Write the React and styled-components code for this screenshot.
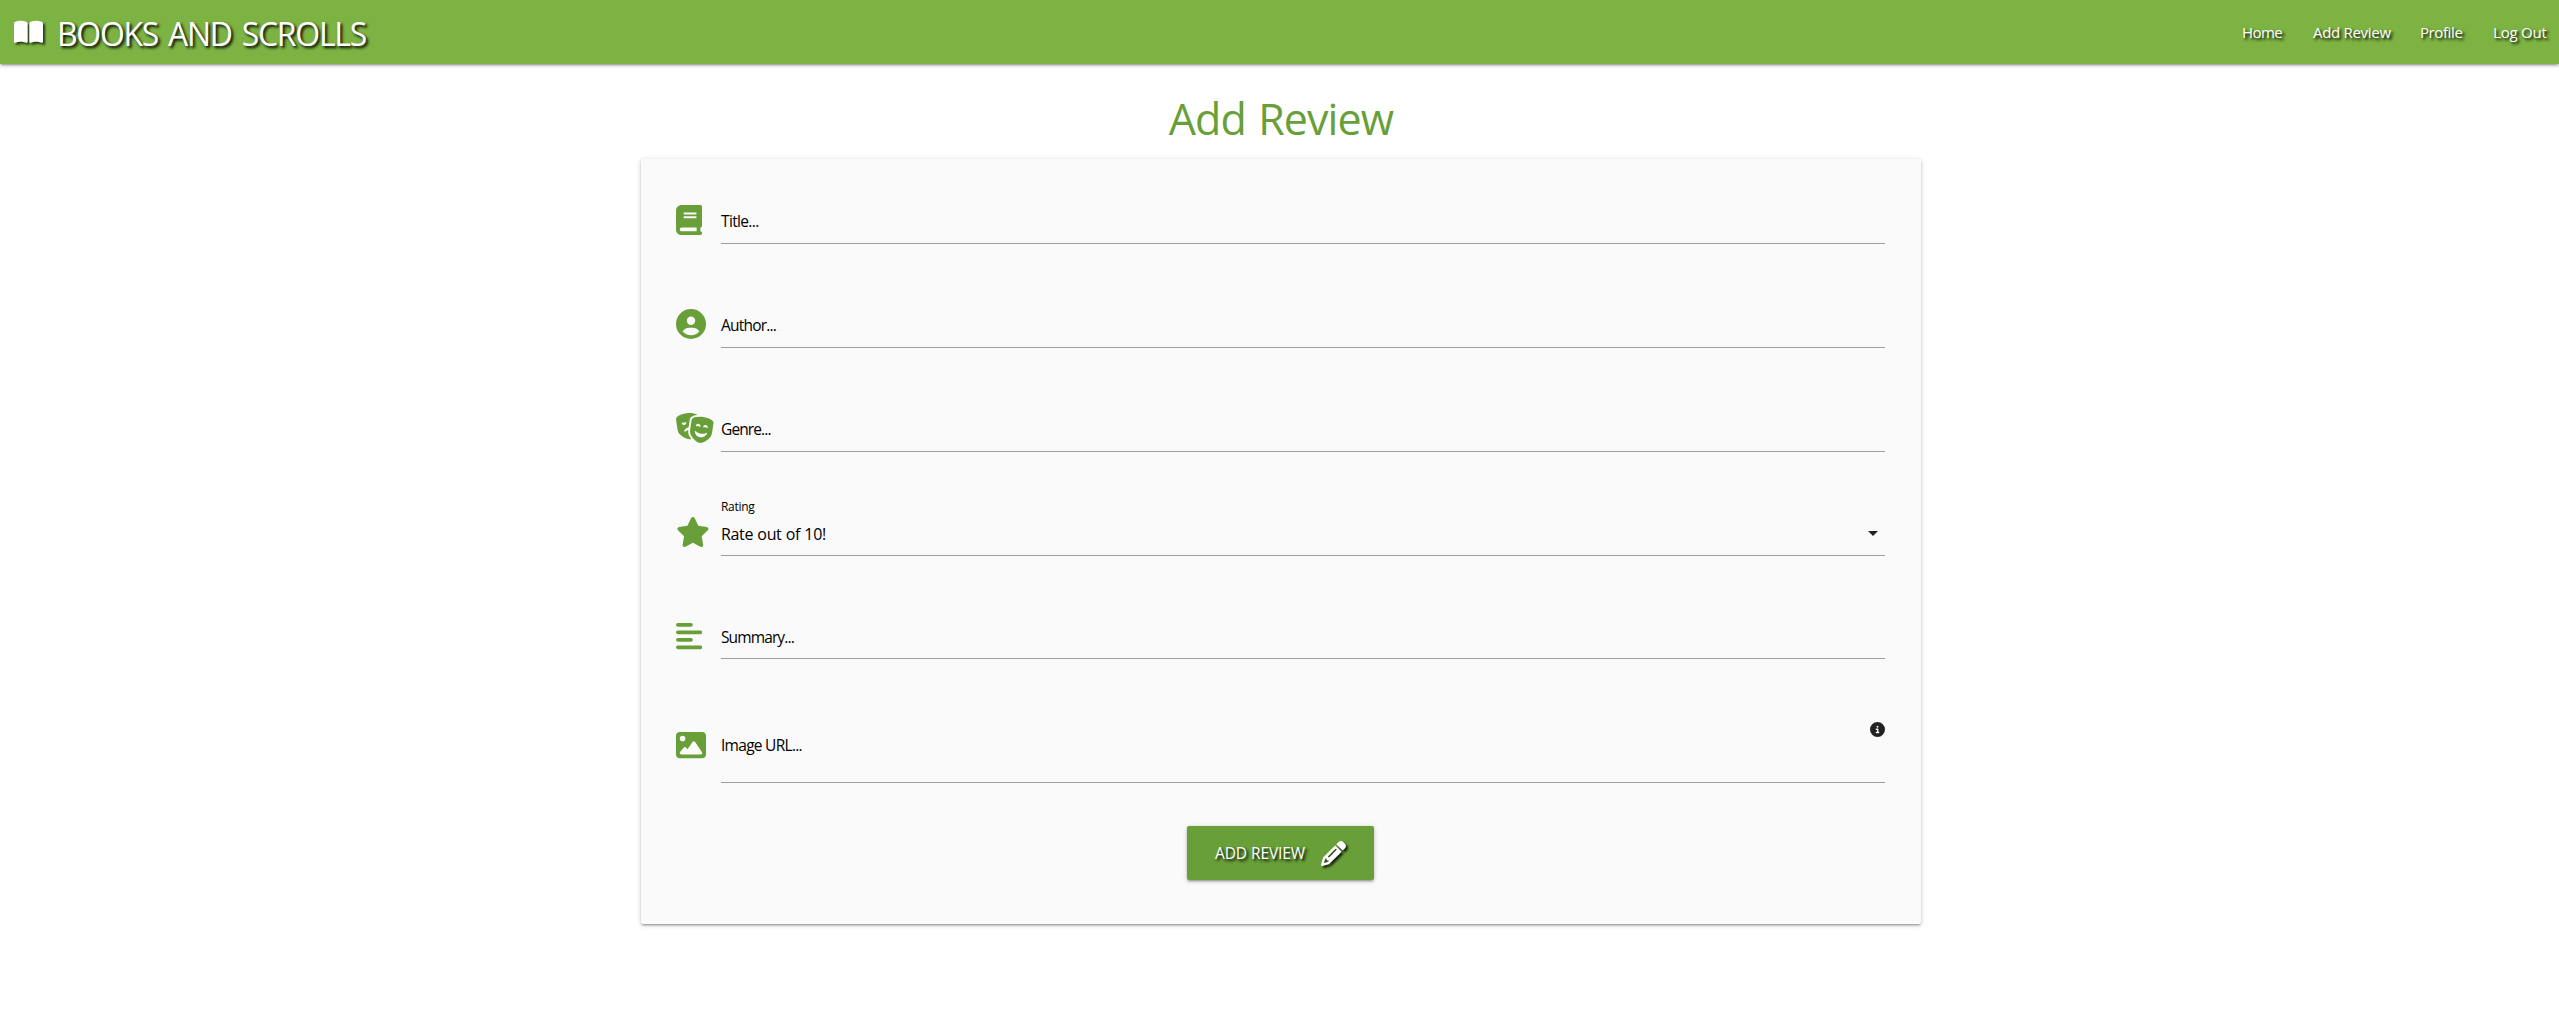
import React from "react";
import styled, { createGlobalStyle } from "styled-components";
import {
  FaBookOpen, FaBook, FaCircleUser, FaMasksTheater, FaStar,
  FaAlignLeft, FaImage, FaCircleInfo, FaPencil,
} from "react-icons/fa6";

const GlobalStyle = createGlobalStyle`
  *, *::before, *::after { box-sizing: border-box; }
  body {
    margin: 0;
    background: #fff;
    color: rgba(0, 0, 0, 0.87);
    font-family: "Segoe UI", "Open Sans", "Noto Sans", sans-serif;
  }
`;

const materialShadow = `
  0 2px 2px 0 rgba(0, 0, 0, 0.14),
  0 3px 1px -2px rgba(0, 0, 0, 0.12),
  0 1px 5px 0 rgba(0, 0, 0, 0.2)`;

const Page = styled.div`
  display: flex;
  flex-direction: column;
  min-height: 100vh;
`;

const Text = styled.span`
  display: block;
  white-space: nowrap;
  letter-spacing: ${(p) => p.$track || 0}px;
  word-spacing: ${(p) => p.$word || 0}px;
`;

const NavBar = styled.nav`
  display: flex;
  justify-content: space-between;
  height: 64px;
  background: #7cb342;
  box-shadow: ${materialShadow};
  color: #fff;
  text-shadow: 2px 2px 3px #000;
`;

const Brand = styled.a`
  display: flex;
  align-items: center;
  gap: 14px;
  padding-left: 14px;
  font-size: 32px;
  line-height: 64px;

  svg {
    width: 29px;
    height: 26px;
    filter: drop-shadow(2px 2px 1px rgba(0, 0, 0, 0.7));
  }
  span { padding-top: 3px; }
`;

const NavLinks = styled.ul`
  display: flex;
  margin: 0;
  padding: 0 13px 0 0;
  gap: 30px;
  list-style: none;
  font-size: 15px;
  line-height: 65px;
`;

const NavItem = styled.li`
  width: ${(p) => p.$width}px;
`;

const Heading = styled.h3`
  display: flex;
  justify-content: center;
  margin: 26px 0 12px;
  padding-left: 3px;
  color: #689f38;
  font-size: 43px;
  font-weight: 400;
  line-height: 57px;
`;

const Card = styled.div`
  display: flex;
  flex-direction: column;
  gap: 40px;
  width: 1280px;
  height: 765px;
  margin: 0 0 0 641px;
  padding: 21px 36px 0 35px;
  border-radius: 2px;
  background: #fafafa;
  box-shadow: ${materialShadow};
`;

const Field = styled.div`
  display: grid;
  grid-template-columns: 45px 1fr;
  height: ${(p) => p.$height || 64}px;
`;

const IconCell = styled.div`
  padding-top: ${(p) => p.$top || 25}px;
  color: #689f38;
  svg { display: block; height: 30px; width: ${(p) => p.$width}px; }
`;

const Control = styled.div`
  display: flex;
  justify-content: space-between;
  border-bottom: 1px solid #9e9e9e;
  color: #000;
  font-size: 15.5px;
  line-height: 20px;
`;

const Label = styled.div`
  padding-top: ${(p) => (p.$tall ? 36 : 31)}px;
`;

const SelectText = styled.div`
  display: flex;
  flex-direction: column;
  padding-top: 6px;
  font-size: 16px;
  gap: 8px;
`;

const SmallLabel = styled.div`
  font-size: 12px;
  line-height: 18px;
`;

const Caret = styled.span`
  margin: 39px 7px 0 0;
  width: 10px;
  height: 5px;
  background: #212121;
  clip-path: polygon(0 0, 100% 0, 50% 100%);
`;

const Info = styled(FaCircleInfo)`
  width: 15px;
  height: 15px;
  margin-top: 23px;
  color: #212121;
`;

const Submit = styled.button`
  display: flex;
  align-items: center;
  align-self: center;
  justify-content: space-between;
  width: 187px;
  height: 54px;
  margin: 3px 0 0;
  padding: 0 28px;
  border: 0;
  border-radius: 2px;
  background: #689f38;
  box-shadow: ${materialShadow};
  color: #fff;
  font-family: inherit;
  font-size: 15.5px;
  text-shadow: 2px 2px 3px #000;

  svg {
    width: 25px;
    height: 25px;
    filter: drop-shadow(2px 2px 1px rgba(0, 0, 0, 0.8));
  }
`;

const links = [
  { name: "Home", width: 41, track: -0.6 },
  { name: "Add Review", width: 77, track: -0.3 },
  { name: "Profile", width: 43, track: -0.4 },
  { name: "Log Out", width: 53, track: -0.2 },
];

function TextField({ icon: Icon, iconWidth, iconTop, height, label, track, tall, children }) {
  return (
    <Field $height={height}>
      <IconCell $top={iconTop} $width={iconWidth}><Icon /></IconCell>
      <Control>
        <Label $tall={tall}><Text $track={track}>{label}</Text></Label>
        {children}
      </Control>
    </Field>
  );
}

export default function App() {
  return (
    <Page>
      <GlobalStyle />
      <NavBar>
        <Brand>
          <FaBookOpen />
          <Text $track={-1.3} $word={3}>BOOKS AND SCROLLS</Text>
        </Brand>
        <NavLinks>
          {links.map((l) => (
            <NavItem key={l.name} $width={l.width}><Text $track={l.track}>{l.name}</Text></NavItem>
          ))}
        </NavLinks>
      </NavBar>
      <Heading><Text $track={-0.9} $word={2}>Add Review</Text></Heading>
      <Card>
        <TextField icon={FaBook} iconWidth={26.25} label="Title..." track={-0.65} />
        <TextField icon={FaCircleUser} iconWidth={30} label="Author..." track={-0.8} />
        <TextField icon={FaMasksTheater} iconWidth={37.5} label="Genre..." track={-0.88} />
        <Field>
          <IconCell $width={33.75}><FaStar /></IconCell>
          <Control>
            <SelectText>
              <SmallLabel><Text $track={-0.3}>Rating</Text></SmallLabel>
              <Text $track={-0.35} $word={0.5}>Rate out of 10!</Text>
            </SelectText>
            <Caret />
          </Control>
        </Field>
        <TextField icon={FaAlignLeft} iconWidth={26.25} iconTop={24.5} height={63} label="Summary..." track={-0.88} />
        <TextField icon={FaImage} iconWidth={30} iconTop={30.5} height={84} label="Image URL..." track={-0.72} tall>
          <Info />
        </TextField>
        <Submit type="button">
          <Text $track={-0.1}>ADD REVIEW</Text>
          <FaPencil />
        </Submit>
      </Card>
    </Page>
  );
}
